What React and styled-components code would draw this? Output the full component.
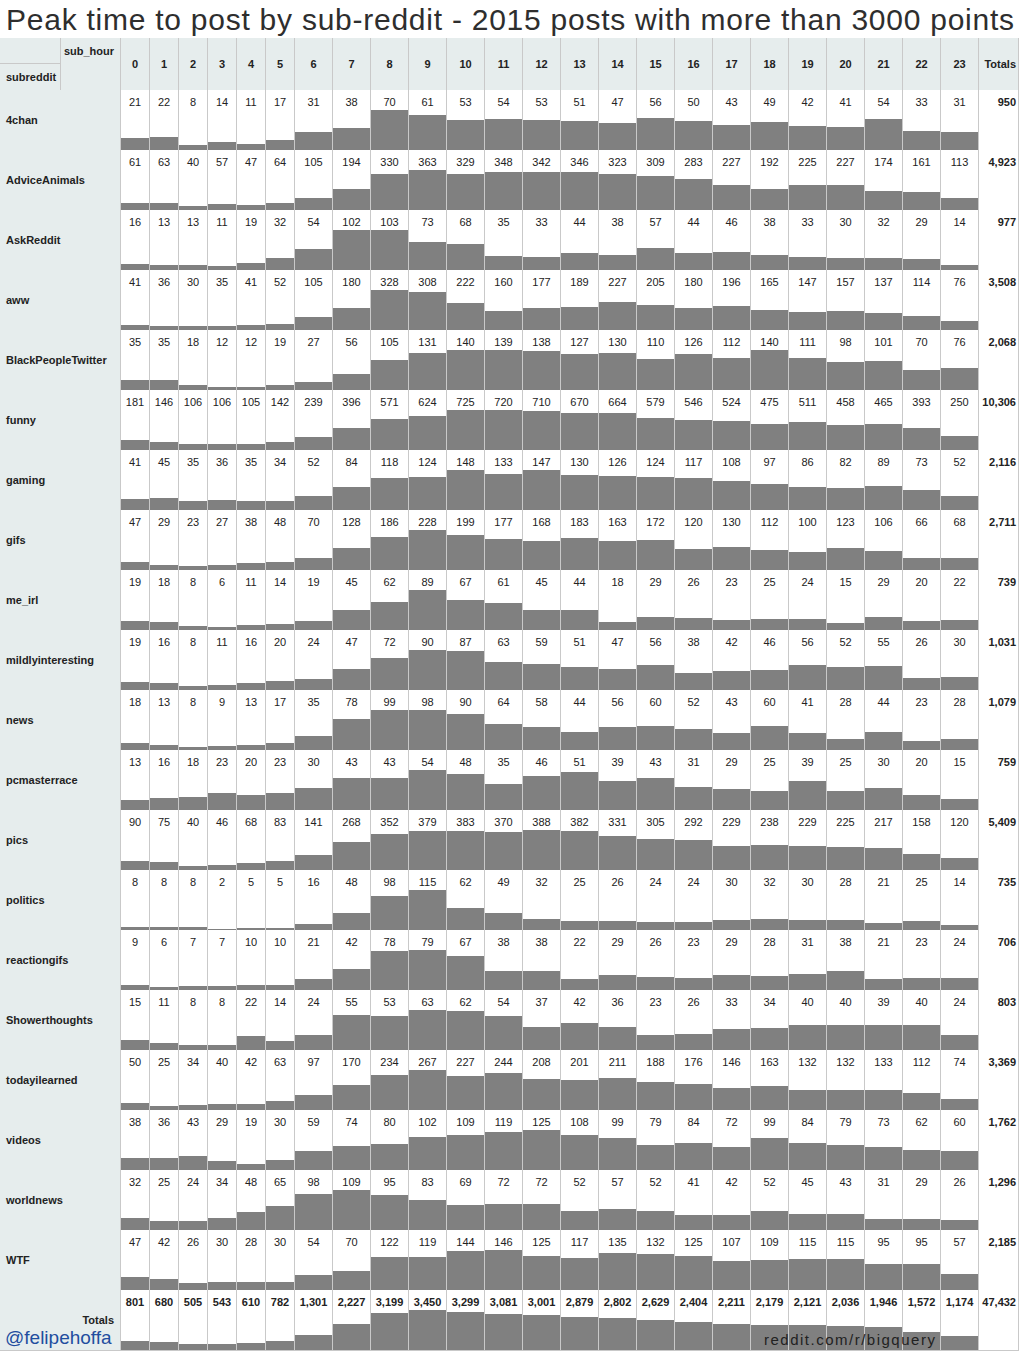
import React from "react";
import styled, { createGlobalStyle } from "styled-components";

const GlobalStyle = createGlobalStyle`
  body {
    margin: 0;
    background: #fff;
    color: #222;
    font-family: "Liberation Sans", Arial, sans-serif;
  }
`;

const COLS = "121px repeat(6, 29px) repeat(18, 38px) 40px";
const BAR_MAX = 40;

const hours = Array.from({ length: 24 }, (_, i) => i);

const rows = [
  ["4chan", [21, 22, 8, 14, 11, 17, 31, 38, 70, 61, 53, 54, 53, 51, 47, 56, 50, 43, 49, 42, 41, 54, 33, 31], "950"],
  ["AdviceAnimals", [61, 63, 40, 57, 47, 64, 105, 194, 330, 363, 329, 348, 342, 346, 323, 309, 283, 227, 192, 225, 227, 174, 161, 113], "4,923"],
  ["AskReddit", [16, 13, 13, 11, 19, 32, 54, 102, 103, 73, 68, 35, 33, 44, 38, 57, 44, 46, 38, 33, 30, 32, 29, 14], "977"],
  ["aww", [41, 36, 30, 35, 41, 52, 105, 180, 328, 308, 222, 160, 177, 189, 227, 205, 180, 196, 165, 147, 157, 137, 114, 76], "3,508"],
  ["BlackPeopleTwitter", [35, 35, 18, 12, 12, 19, 27, 56, 105, 131, 140, 139, 138, 127, 130, 110, 126, 112, 140, 111, 98, 101, 70, 76], "2,068"],
  ["funny", [181, 146, 106, 106, 105, 142, 239, 396, 571, 624, 725, 720, 710, 670, 664, 579, 546, 524, 475, 511, 458, 465, 393, 250], "10,306"],
  ["gaming", [41, 45, 35, 36, 35, 34, 52, 84, 118, 124, 148, 133, 147, 130, 126, 124, 117, 108, 97, 86, 82, 89, 73, 52], "2,116"],
  ["gifs", [47, 29, 23, 27, 38, 48, 70, 128, 186, 228, 199, 177, 168, 183, 163, 172, 120, 130, 112, 100, 123, 106, 66, 68], "2,711"],
  ["me_irl", [19, 18, 8, 6, 11, 14, 19, 45, 62, 89, 67, 61, 45, 44, 18, 29, 26, 23, 25, 24, 15, 29, 20, 22], "739"],
  ["mildlyinteresting", [19, 16, 8, 11, 16, 20, 24, 47, 72, 90, 87, 63, 59, 51, 47, 56, 38, 42, 46, 56, 52, 55, 26, 30], "1,031"],
  ["news", [18, 13, 8, 9, 13, 17, 35, 78, 99, 98, 90, 64, 58, 44, 56, 60, 52, 43, 60, 41, 28, 44, 23, 28], "1,079"],
  ["pcmasterrace", [13, 16, 18, 23, 20, 23, 30, 43, 43, 54, 48, 35, 46, 51, 39, 43, 31, 29, 25, 39, 25, 30, 20, 15], "759"],
  ["pics", [90, 75, 40, 46, 68, 83, 141, 268, 352, 379, 383, 370, 388, 382, 331, 305, 292, 229, 238, 229, 225, 217, 158, 120], "5,409"],
  ["politics", [8, 8, 8, 2, 5, 5, 16, 48, 98, 115, 62, 49, 32, 25, 26, 24, 24, 30, 32, 30, 28, 21, 25, 14], "735"],
  ["reactiongifs", [9, 6, 7, 7, 10, 10, 21, 42, 78, 79, 67, 38, 38, 22, 29, 26, 23, 29, 28, 31, 38, 21, 23, 24], "706"],
  ["Showerthoughts", [15, 11, 8, 8, 22, 14, 24, 55, 53, 63, 62, 54, 37, 42, 36, 23, 26, 33, 34, 40, 40, 39, 40, 24], "803"],
  ["todayilearned", [50, 25, 34, 40, 42, 63, 97, 170, 234, 267, 227, 244, 208, 201, 211, 188, 176, 146, 163, 132, 132, 133, 112, 74], "3,369"],
  ["videos", [38, 36, 43, 29, 19, 30, 59, 74, 80, 102, 109, 119, 125, 108, 99, 79, 84, 72, 99, 84, 79, 73, 62, 60], "1,762"],
  ["worldnews", [32, 25, 24, 34, 48, 65, 98, 109, 95, 83, 69, 72, 72, 52, 57, 52, 41, 42, 52, 45, 43, 31, 29, 26], "1,296"],
  ["WTF", [47, 42, 26, 30, 28, 30, 54, 70, 122, 119, 144, 146, 125, 117, 135, 132, 125, 107, 109, 115, 115, 95, 95, 57], "2,185"],
];

const totals = [801, 680, 505, 543, 610, 782, 1301, 2227, 3199, 3450, 3299, 3081, 3001, 2879, 2802, 2629, 2404, 2211, 2179, 2121, 2036, 1946, 1572, 1174];

const Page = styled.div`
  width: 1023px;
`;

const Title = styled.h1`
  margin: 0;
  height: 38px;
  padding-left: 6px;
  font-family: "Liberation Sans", Arial, sans-serif;
  font-size: 30px;
  font-weight: 400;
  line-height: 40px;
  letter-spacing: 0.75px;
  color: #2e2e2e;
  white-space: nowrap;
  overflow: hidden;
`;

const Table = styled.div`
  position: relative;
  width: 1019px;
  border-bottom: 1px solid #c9c9c9;
`;

const Row = styled.div`
  display: grid;
  grid-template-columns: ${COLS};
  height: ${(p) => p.$height || 60}px;
  background: ${(p) => (p.$head ? "#e6eded" : "#fff")};
`;

const Corner = styled.div`
  display: grid;
  grid-template-columns: 61px 60px;
  grid-template-rows: 26px 26px;
  font-size: 11px;
  font-weight: 700;
`;

const CornerCell = styled.div`
  box-sizing: border-box;
  display: flex;
  align-items: center;
  justify-content: ${(p) => (p.$right ? "flex-end" : "flex-start")};
  padding: 0 6px;
  border-right: 1px solid #c9c9c9;
  border-bottom: ${(p) => (p.$underline ? "1px solid #c9c9c9" : "none")};
`;

const HeadCell = styled.div`
  box-sizing: border-box;
  display: flex;
  align-items: center;
  justify-content: ${(p) => (p.$right ? "flex-end" : "center")};
  padding-right: ${(p) => (p.$right ? "2px" : "0")};
  border-right: 1px solid #c9c9c9;
  font-size: 11px;
  font-weight: 700;
`;

const Label = styled.div`
  box-sizing: border-box;
  display: flex;
  align-items: center;
  justify-content: ${(p) => (p.$right ? "flex-end" : "flex-start")};
  padding: 0 6px;
  background: #e6eded;
  border-right: 1px solid #c9c9c9;
  font-size: 11px;
  font-weight: 700;
  white-space: nowrap;
`;

const Cell = styled.div`
  box-sizing: border-box;
  display: flex;
  flex-direction: column;
  justify-content: space-between;
  border-right: 1px solid #c9c9c9;
`;

const Num = styled.span`
  padding-top: 6px;
  padding-right: ${(p) => (p.$right ? "2px" : "0")};
  text-align: ${(p) => (p.$right ? "right" : "center")};
  font-size: 11px;
  line-height: 13px;
  font-weight: ${(p) => (p.$bold ? 700 : 400)};
  white-space: nowrap;
`;

const Bar = styled.div`
  background: #808080;
`;

const Handle = styled.span`
  position: absolute;
  left: 5px;
  bottom: 2px;
  font-family: "Liberation Sans", Arial, sans-serif;
  font-size: 19px;
  line-height: 20px;
  color: #1f4e9f;
`;

const Source = styled.span`
  position: absolute;
  left: 764px;
  bottom: 3px;
  font-family: "Liberation Sans", Arial, sans-serif;
  font-size: 15px;
  line-height: 15px;
  letter-spacing: 1.5px;
  color: #222;
`;

const fmt = (n) => n.toLocaleString("en-US");

function DataRow({ name, values, total, bold, right }) {
  const max = Math.max(...values);
  return (
    <Row>
      <Label $right={right}>{name}</Label>
      {values.map((v, i) => (
        <Cell key={i}>
          <Num $bold={bold}>{fmt(v)}</Num>
          <Bar style={{ height: `${(v / max) * BAR_MAX}px` }} />
        </Cell>
      ))}
      <Cell>
        <Num $bold $right>
          {total}
        </Num>
      </Cell>
    </Row>
  );
}

export default function App() {
  return (
    <Page>
      <GlobalStyle />
      <Title>Peak time to post by sub-reddit - 2015 posts with more than 3000 points</Title>
      <Table>
        <Row $head $height={52}>
          <Corner>
            <CornerCell $underline />
            <CornerCell $right>sub_hour</CornerCell>
            <CornerCell>subreddit</CornerCell>
            <CornerCell />
          </Corner>
          {hours.map((h) => (
            <HeadCell key={h}>{h}</HeadCell>
          ))}
          <HeadCell $right>Totals</HeadCell>
        </Row>
        {rows.map(([name, values, total]) => (
          <DataRow key={name} name={name} values={values} total={total} />
        ))}
        <DataRow name="Totals" values={totals} total="47,432" bold right />
        <Handle>@felipehoffa</Handle>
        <Source>reddit.com/r/bigquery</Source>
      </Table>
    </Page>
  );
}
